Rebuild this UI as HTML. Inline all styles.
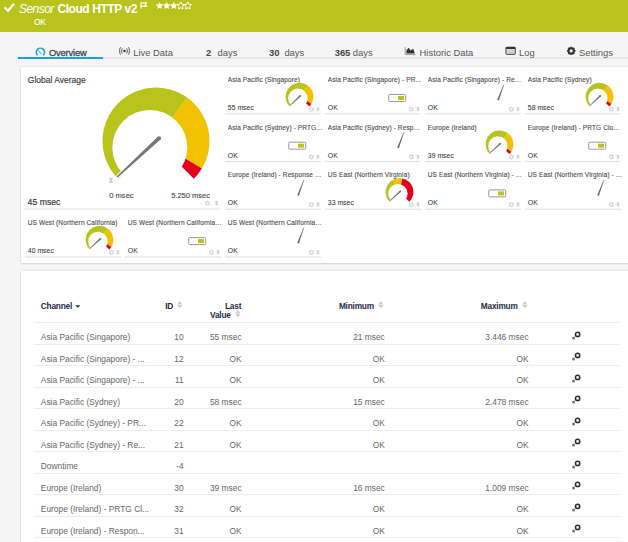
<!DOCTYPE html>
<html><head><meta charset="utf-8"><style>
*{margin:0;padding:0;box-sizing:border-box}
html,body{width:628px;height:542px;overflow:hidden;background:#f5f5f5;font-family:"Liberation Sans",sans-serif;position:relative}
.abs{position:absolute}
#hdr{position:absolute;left:0;top:0;width:628px;height:32px;background:#b8c31b}
.tab{position:absolute;top:47.7px;font-size:9.4px;color:#555;white-space:nowrap;line-height:10px}
.tab b{color:#444}
.panel{position:absolute;background:#fff;box-shadow:0 0 2px rgba(0,0,0,0.12),0 1px 2px rgba(0,0,0,0.10)}
.tt{position:absolute;font-size:6.5px;letter-spacing:0.12px;color:#4e4e4e;-webkit-text-stroke:0.12px #4e4e4e;white-space:nowrap;line-height:8px;width:95px;overflow:hidden;text-overflow:ellipsis}
.tv{position:absolute;font-size:6.9px;color:#383838;-webkit-text-stroke:0.06px #383838;white-space:nowrap;line-height:8px}
.th{position:absolute;font-size:8.3px;font-weight:bold;color:#1f2a44;white-space:nowrap;line-height:9px;letter-spacing:-0.2px}
.td{position:absolute;font-size:8.4px;color:#666;white-space:nowrap;line-height:10px}
.rl{position:absolute;left:34px;width:586px;height:1px;background:#ececec}
.ic{position:absolute}
svg.full{position:absolute;left:0;top:0}
</style></head><body>
<div id="hdr"></div>
<svg class="full" width="628" height="40" viewBox="0 0 628 40">
<path d="M4.5,7.4L8.0,10.8L14.0,3.8" fill="none" stroke="#fff" stroke-width="2.2"/>
<path d="M140.9,2.4v6.2 M140.9,2.9h5.7l-1.5,1.6l1.5,1.6h-5.7" fill="none" stroke="#fff" stroke-width="1.1"/>
<polygon points="159.60,1.90 160.75,4.22 163.31,4.59 161.45,6.40 161.89,8.96 159.60,7.75 157.31,8.96 157.75,6.40 155.89,4.59 158.45,4.22" fill="#fff"/><polygon points="166.65,1.90 167.80,4.22 170.36,4.59 168.50,6.40 168.94,8.96 166.65,7.75 164.36,8.96 164.80,6.40 162.94,4.59 165.50,4.22" fill="#fff"/><polygon points="173.70,1.90 174.85,4.22 177.41,4.59 175.55,6.40 175.99,8.96 173.70,7.75 171.41,8.96 171.85,6.40 169.99,4.59 172.55,4.22" fill="#fff"/><polygon points="180.75,1.90 181.90,4.22 184.46,4.59 182.60,6.40 183.04,8.96 180.75,7.75 178.46,8.96 178.90,6.40 177.04,4.59 179.60,4.22" fill="none" stroke="#fff" stroke-width="1.0"/><polygon points="187.80,1.90 188.95,4.22 191.51,4.59 189.65,6.40 190.09,8.96 187.80,7.75 185.51,8.96 185.95,6.40 184.09,4.59 186.65,4.22" fill="none" stroke="#fff" stroke-width="1.0"/>
</svg>
<div class="abs" style="left:19px;top:3px;font-size:12px;letter-spacing:-0.55px;font-style:italic;color:#fff;white-space:nowrap;line-height:13px">Sensor</div>
<div class="abs" style="left:57.4px;top:3px;font-size:12px;letter-spacing:-0.42px;font-weight:bold;color:#fff;white-space:nowrap;line-height:13px">Cloud HTTP v2</div>
<div class="abs" style="left:34px;top:17.8px;font-size:8.5px;letter-spacing:-0.3px;color:#fff;white-space:nowrap;line-height:9px;-webkit-text-stroke:0.15px #fff">OK</div>

<div class="abs" style="left:18px;top:57px;width:610px;height:2px;background:#e6e6e6"></div>
<div class="abs" style="left:18px;top:57px;width:84.5px;height:2px;background:#1ea0dc"></div>
<svg class="full" width="628" height="70" viewBox="0 0 628 70">
<path d="M37.5,55.2A4.1,4.1 0 1 1 43.3,55.2" fill="none" stroke="#1ea0dc" stroke-width="1.6"/>
<path d="M38.6,51.0L41.2,53.6" stroke="#6cbce6" stroke-width="1.3" stroke-linecap="round"/>
<circle cx="124.5" cy="50.9" r="1.25" fill="#333"/>
<path d="M122.4,48.3A1.0,2.7 0 0 0 122.4,53.5M126.6,48.3A1.0,2.7 0 0 1 126.6,53.5M120.9,47.3A1.3,3.6 0 0 0 120.9,54.5M128.1,47.3A1.3,3.6 0 0 1 128.1,54.5" fill="none" stroke="#555" stroke-width="0.95"/>
<path d="M405.2,47V54.6H415.6" fill="none" stroke="#999" stroke-width="1"/>
<path d="M406.4,53.4V50.4L408.6,47.8L410.6,50.6L411.6,49.8L413.4,49.0L414.8,53.4Z" fill="#333"/>
<rect x="505.9" y="47.2" width="9.4" height="7.2" rx="1.2" fill="#ddd" stroke="#444" stroke-width="1"/>
<rect x="505.9" y="47.0" width="9.4" height="2" fill="#333"/>
<path d="M507.6,50.8h6M507.6,52.6h6" stroke="#aaa" stroke-width="0.6"/>
<g transform="translate(571.2,50.9)"><circle r="2.6" fill="none" stroke="#333" stroke-width="2"/>
<path d="M0,-4.2V-2.5M0,4.2V2.5M-4.2,0H-2.5M4.2,0H2.5M-3,-3L-1.8,-1.8M3,3L1.8,1.8M-3,3L-1.8,1.8M3,-3L1.8,-1.8" stroke="#333" stroke-width="1.7"/></g>
</svg>
<div class="tab" style="left:49px;color:#3f4450;-webkit-text-stroke:0.3px #3f4450;letter-spacing:-0.2px">Overview</div>
<div class="tab" style="left:133.3px">Live Data</div>
<div class="tab" style="left:206px"><b>2</b></div><div class="tab" style="left:217.6px">days</div>
<div class="tab" style="left:269px"><b>30</b></div><div class="tab" style="left:284.4px">days</div>
<div class="tab" style="left:334.7px"><b>365</b></div><div class="tab" style="left:352.8px">days</div>
<div class="tab" style="left:419.6px">Historic Data</div>
<div class="tab" style="left:519px">Log</div>
<div class="tab" style="left:579px">Settings</div>

<div class="panel" style="left:21px;top:67px;width:620px;height:196px"></div>
<div class="panel" style="left:21px;top:271px;width:620px;height:300px"></div>

<div class="abs" style="left:27.8px;top:76px;font-size:8.5px;color:#3a3a3a;-webkit-text-stroke:0.15px #3a3a3a;white-space:nowrap;line-height:9px">Global Average</div>
<div class="abs" style="left:27.6px;top:198.2px;font-size:8.7px;color:#333;-webkit-text-stroke:0.15px #333;white-space:nowrap;line-height:9px">45 msec</div>
<div class="abs" style="left:109.2px;top:192px;font-size:7.6px;color:#444;-webkit-text-stroke:0.1px #444;white-space:nowrap;line-height:8px">0 msec</div>
<div class="abs" style="left:171.2px;top:192px;font-size:7.5px;color:#444;-webkit-text-stroke:0.1px #444;white-space:nowrap;line-height:8px">5.250 msec</div>

<div class="tt" style="left:227.8px;top:75.8px">Asia Pacific (Singapore)</div><div class="tv" style="left:227.8px;top:104.0px">55 msec</div><div class="tt" style="left:327.8px;top:75.8px">Asia Pacific (Singapore) - PR...</div><div class="tv" style="left:327.8px;top:104.0px">OK</div><div class="tt" style="left:427.8px;top:75.8px">Asia Pacific (Singapore) - Res...</div><div class="tv" style="left:427.8px;top:104.0px">OK</div><div class="tt" style="left:527.8px;top:75.8px">Asia Pacific (Sydney)</div><div class="tv" style="left:527.8px;top:104.0px">58 msec</div><div class="tt" style="left:227.8px;top:123.5px">Asia Pacific (Sydney) - PRTG ...</div><div class="tv" style="left:227.8px;top:151.7px">OK</div><div class="tt" style="left:327.8px;top:123.5px">Asia Pacific (Sydney) - Respo...</div><div class="tv" style="left:327.8px;top:151.7px">OK</div><div class="tt" style="left:427.8px;top:123.5px">Europe (Ireland)</div><div class="tv" style="left:427.8px;top:151.7px">39 msec</div><div class="tt" style="left:527.8px;top:123.5px">Europe (Ireland) - PRTG Cloud...</div><div class="tv" style="left:527.8px;top:151.7px">OK</div><div class="tt" style="left:227.8px;top:171.2px">Europe (Ireland) - Response C...</div><div class="tv" style="left:227.8px;top:199.4px">OK</div><div class="tt" style="left:327.8px;top:171.2px">US East (Northern Virginia)</div><div class="tv" style="left:327.8px;top:199.4px">33 msec</div><div class="tt" style="left:427.8px;top:171.2px">US East (Northern Virginia) - ...</div><div class="tv" style="left:427.8px;top:199.4px">OK</div><div class="tt" style="left:527.8px;top:171.2px">US East (Northern Virginia) - ...</div><div class="tv" style="left:527.8px;top:199.4px">OK</div><div class="tt" style="left:27.8px;top:218.9px">US West (Northern California)</div><div class="tv" style="left:27.8px;top:247.1px">40 msec</div><div class="tt" style="left:127.8px;top:218.9px">US West (Northern California)...</div><div class="tv" style="left:127.8px;top:247.1px">OK</div><div class="tt" style="left:227.8px;top:218.9px">US West (Northern California)...</div><div class="tv" style="left:227.8px;top:247.1px">OK</div>
<svg class="full" width="628" height="542" viewBox="0 0 628 542">
<rect x="224.8" y="113.2" width="96" height="1.2" fill="#e3e3e3"/><circle cx="311.40" cy="109.30" r="1.75" fill="none" stroke="#d3d3d3" stroke-width="1.3"/><path d="M316.40,107.20h3.2v0.9h-0.6v1.5l1,1h-4.0l1,-1v-1.5h-0.6z M317.70,110.60h0.6v1.4h-0.6z" fill="#d2d2d2"/><mask id="m1" maskUnits="userSpaceOnUse" x="0" y="0" width="628" height="542"><rect x="0" y="0" width="628" height="542" fill="#fff"/><circle cx="297.89" cy="98.28" r="9.71" fill="#000"/></mask><g mask="url(#m1)"><path d="M299.50,96.60L289.71,106.39A13.85,13.85 0 0 1 307.56,85.34Z" fill="#b8c31b"/><path d="M299.50,96.60L307.56,85.34A13.85,13.85 0 0 1 311.37,103.73Z" fill="#f2c200"/><path d="M299.50,96.60L311.37,103.73A13.85,13.85 0 0 1 309.29,106.39Z" fill="#e2001a"/></g><path d="M299.72,95.24L289.20,105.67L289.66,106.17L300.88,96.48Z" fill="#777" stroke="#fff" stroke-width="1.00" stroke-linejoin="round" paint-order="stroke"/><circle cx="300.30" cy="95.86" r="0.85" fill="#777"/><rect x="324.8" y="113.2" width="96" height="1.2" fill="#e3e3e3"/><circle cx="411.40" cy="109.30" r="1.75" fill="none" stroke="#d3d3d3" stroke-width="1.3"/><path d="M416.40,107.20h3.2v0.9h-0.6v1.5l1,1h-4.0l1,-1v-1.5h-0.6z M417.70,110.60h0.6v1.4h-0.6z" fill="#d2d2d2"/><rect x="388.7" y="94.5" width="17" height="7" rx="1" fill="#fff" stroke="#9a9a9a" stroke-width="1"/><rect x="398.0" y="96.0" width="6" height="4" fill="#b8c31b"/><rect x="424.8" y="113.2" width="96" height="1.2" fill="#e3e3e3"/><circle cx="511.40" cy="109.30" r="1.75" fill="none" stroke="#d3d3d3" stroke-width="1.3"/><path d="M516.40,107.20h3.2v0.9h-0.6v1.5l1,1h-4.0l1,-1v-1.5h-0.6z M517.70,110.60h0.6v1.4h-0.6z" fill="#d2d2d2"/><path d="M497.50,99.80L498.70,100.20L503.80,84.70Z" fill="#555" stroke="#555" stroke-width="0.35" stroke-linejoin="round"/><rect x="524.8" y="113.2" width="96" height="1.2" fill="#e3e3e3"/><circle cx="611.40" cy="109.30" r="1.75" fill="none" stroke="#d3d3d3" stroke-width="1.3"/><path d="M616.40,107.20h3.2v0.9h-0.6v1.5l1,1h-4.0l1,-1v-1.5h-0.6z M617.70,110.60h0.6v1.4h-0.6z" fill="#d2d2d2"/><mask id="m2" maskUnits="userSpaceOnUse" x="0" y="0" width="628" height="542"><rect x="0" y="0" width="628" height="542" fill="#fff"/><circle cx="597.89" cy="98.28" r="9.71" fill="#000"/></mask><g mask="url(#m2)"><path d="M599.50,96.60L589.71,106.39A13.85,13.85 0 0 1 607.56,85.34Z" fill="#b8c31b"/><path d="M599.50,96.60L607.56,85.34A13.85,13.85 0 0 1 611.37,103.73Z" fill="#f2c200"/><path d="M599.50,96.60L611.37,103.73A13.85,13.85 0 0 1 609.29,106.39Z" fill="#e2001a"/></g><path d="M599.72,95.24L589.20,105.67L589.66,106.17L600.88,96.48Z" fill="#777" stroke="#fff" stroke-width="1.00" stroke-linejoin="round" paint-order="stroke"/><circle cx="600.30" cy="95.86" r="0.85" fill="#777"/><rect x="224.8" y="160.9" width="96" height="1.2" fill="#e3e3e3"/><circle cx="311.40" cy="157.00" r="1.75" fill="none" stroke="#d3d3d3" stroke-width="1.3"/><path d="M316.40,154.90h3.2v0.9h-0.6v1.5l1,1h-4.0l1,-1v-1.5h-0.6z M317.70,158.30h0.6v1.4h-0.6z" fill="#d2d2d2"/><rect x="288.7" y="142.2" width="17" height="7" rx="1" fill="#fff" stroke="#9a9a9a" stroke-width="1"/><rect x="298.0" y="143.7" width="6" height="4" fill="#b8c31b"/><rect x="324.8" y="160.9" width="96" height="1.2" fill="#e3e3e3"/><circle cx="411.40" cy="157.00" r="1.75" fill="none" stroke="#d3d3d3" stroke-width="1.3"/><path d="M416.40,154.90h3.2v0.9h-0.6v1.5l1,1h-4.0l1,-1v-1.5h-0.6z M417.70,158.30h0.6v1.4h-0.6z" fill="#d2d2d2"/><path d="M397.50,147.50L398.70,147.90L403.80,132.40Z" fill="#555" stroke="#555" stroke-width="0.35" stroke-linejoin="round"/><rect x="424.8" y="160.9" width="96" height="1.2" fill="#e3e3e3"/><circle cx="511.40" cy="157.00" r="1.75" fill="none" stroke="#d3d3d3" stroke-width="1.3"/><path d="M516.40,154.90h3.2v0.9h-0.6v1.5l1,1h-4.0l1,-1v-1.5h-0.6z M517.70,158.30h0.6v1.4h-0.6z" fill="#d2d2d2"/><mask id="m3" maskUnits="userSpaceOnUse" x="0" y="0" width="628" height="542"><rect x="0" y="0" width="628" height="542" fill="#fff"/><circle cx="497.89" cy="145.98" r="9.71" fill="#000"/></mask><g mask="url(#m3)"><path d="M499.50,144.30L489.71,154.09A13.85,13.85 0 0 1 507.56,133.04Z" fill="#b8c31b"/><path d="M499.50,144.30L507.56,133.04A13.85,13.85 0 0 1 511.37,151.43Z" fill="#f2c200"/><path d="M499.50,144.30L511.37,151.43A13.85,13.85 0 0 1 509.29,154.09Z" fill="#e2001a"/></g><path d="M499.72,142.94L489.20,153.37L489.66,153.87L500.88,144.18Z" fill="#777" stroke="#fff" stroke-width="1.00" stroke-linejoin="round" paint-order="stroke"/><circle cx="500.30" cy="143.56" r="0.85" fill="#777"/><rect x="524.8" y="160.9" width="96" height="1.2" fill="#e3e3e3"/><circle cx="611.40" cy="157.00" r="1.75" fill="none" stroke="#d3d3d3" stroke-width="1.3"/><path d="M616.40,154.90h3.2v0.9h-0.6v1.5l1,1h-4.0l1,-1v-1.5h-0.6z M617.70,158.30h0.6v1.4h-0.6z" fill="#d2d2d2"/><rect x="588.7" y="142.2" width="17" height="7" rx="1" fill="#fff" stroke="#9a9a9a" stroke-width="1"/><rect x="598.0" y="143.7" width="6" height="4" fill="#b8c31b"/><rect x="224.8" y="208.6" width="96" height="1.2" fill="#e3e3e3"/><circle cx="311.40" cy="204.70" r="1.75" fill="none" stroke="#d3d3d3" stroke-width="1.3"/><path d="M316.40,202.60h3.2v0.9h-0.6v1.5l1,1h-4.0l1,-1v-1.5h-0.6z M317.70,206.00h0.6v1.4h-0.6z" fill="#d2d2d2"/><path d="M297.50,195.20L298.70,195.60L303.80,180.10Z" fill="#555" stroke="#555" stroke-width="0.35" stroke-linejoin="round"/><rect x="324.8" y="208.6" width="96" height="1.2" fill="#e3e3e3"/><circle cx="411.40" cy="204.70" r="1.75" fill="none" stroke="#d3d3d3" stroke-width="1.3"/><path d="M416.40,202.60h3.2v0.9h-0.6v1.5l1,1h-4.0l1,-1v-1.5h-0.6z M417.70,206.00h0.6v1.4h-0.6z" fill="#d2d2d2"/><mask id="m4" maskUnits="userSpaceOnUse" x="0" y="0" width="628" height="542"><rect x="0" y="0" width="628" height="542" fill="#fff"/><circle cx="397.89" cy="193.68" r="9.71" fill="#000"/></mask><g mask="url(#m4)"><path d="M399.50,192.00L389.71,201.79A13.85,13.85 0 0 1 392.45,180.08Z" fill="#b8c31b"/><path d="M399.50,192.00L392.45,180.08A13.85,13.85 0 0 1 402.38,178.45Z" fill="#f2c200"/><path d="M399.50,192.00L402.38,178.45A13.85,13.85 0 0 1 409.29,201.79Z" fill="#e2001a"/></g><path d="M399.72,190.64L389.20,201.07L389.66,201.57L400.88,191.88Z" fill="#777" stroke="#fff" stroke-width="1.00" stroke-linejoin="round" paint-order="stroke"/><circle cx="400.30" cy="191.26" r="0.85" fill="#777"/><rect x="424.8" y="208.6" width="96" height="1.2" fill="#e3e3e3"/><circle cx="511.40" cy="204.70" r="1.75" fill="none" stroke="#d3d3d3" stroke-width="1.3"/><path d="M516.40,202.60h3.2v0.9h-0.6v1.5l1,1h-4.0l1,-1v-1.5h-0.6z M517.70,206.00h0.6v1.4h-0.6z" fill="#d2d2d2"/><rect x="488.7" y="189.9" width="17" height="7" rx="1" fill="#fff" stroke="#9a9a9a" stroke-width="1"/><rect x="498.0" y="191.4" width="6" height="4" fill="#b8c31b"/><rect x="524.8" y="208.6" width="96" height="1.2" fill="#e3e3e3"/><circle cx="611.40" cy="204.70" r="1.75" fill="none" stroke="#d3d3d3" stroke-width="1.3"/><path d="M616.40,202.60h3.2v0.9h-0.6v1.5l1,1h-4.0l1,-1v-1.5h-0.6z M617.70,206.00h0.6v1.4h-0.6z" fill="#d2d2d2"/><path d="M597.50,195.20L598.70,195.60L603.80,180.10Z" fill="#555" stroke="#555" stroke-width="0.35" stroke-linejoin="round"/><rect x="24.8" y="256.3" width="96" height="1.2" fill="#e3e3e3"/><circle cx="111.40" cy="252.40" r="1.75" fill="none" stroke="#d3d3d3" stroke-width="1.3"/><path d="M116.40,250.30h3.2v0.9h-0.6v1.5l1,1h-4.0l1,-1v-1.5h-0.6z M117.70,253.70h0.6v1.4h-0.6z" fill="#d2d2d2"/><mask id="m5" maskUnits="userSpaceOnUse" x="0" y="0" width="628" height="542"><rect x="0" y="0" width="628" height="542" fill="#fff"/><circle cx="97.89" cy="241.38" r="9.71" fill="#000"/></mask><g mask="url(#m5)"><path d="M99.50,239.70L89.71,249.49A13.85,13.85 0 0 1 107.56,228.44Z" fill="#b8c31b"/><path d="M99.50,239.70L107.56,228.44A13.85,13.85 0 0 1 111.37,246.83Z" fill="#f2c200"/><path d="M99.50,239.70L111.37,246.83A13.85,13.85 0 0 1 109.29,249.49Z" fill="#e2001a"/></g><path d="M99.72,238.34L89.20,248.77L89.66,249.27L100.88,239.58Z" fill="#777" stroke="#fff" stroke-width="1.00" stroke-linejoin="round" paint-order="stroke"/><circle cx="100.30" cy="238.96" r="0.85" fill="#777"/><rect x="124.8" y="256.3" width="96" height="1.2" fill="#e3e3e3"/><circle cx="211.40" cy="252.40" r="1.75" fill="none" stroke="#d3d3d3" stroke-width="1.3"/><path d="M216.40,250.30h3.2v0.9h-0.6v1.5l1,1h-4.0l1,-1v-1.5h-0.6z M217.70,253.70h0.6v1.4h-0.6z" fill="#d2d2d2"/><rect x="188.7" y="237.6" width="17" height="7" rx="1" fill="#fff" stroke="#9a9a9a" stroke-width="1"/><rect x="198.0" y="239.1" width="6" height="4" fill="#b8c31b"/><rect x="224.8" y="256.3" width="96" height="1.2" fill="#e3e3e3"/><circle cx="311.40" cy="252.40" r="1.75" fill="none" stroke="#d3d3d3" stroke-width="1.3"/><path d="M316.40,250.30h3.2v0.9h-0.6v1.5l1,1h-4.0l1,-1v-1.5h-0.6z M317.70,253.70h0.6v1.4h-0.6z" fill="#d2d2d2"/><path d="M297.50,242.90L298.70,243.30L303.80,227.80Z" fill="#555" stroke="#555" stroke-width="0.35" stroke-linejoin="round"/><mask id="m6" maskUnits="userSpaceOnUse" x="0" y="0" width="628" height="542"><rect x="0" y="0" width="628" height="542" fill="#fff"/><circle cx="149.80" cy="147.50" r="37.50" fill="#000"/></mask><g mask="url(#m6)"><path d="M156.00,141.00L118.17,178.83A53.50,53.50 0 0 1 187.14,97.50Z" fill="#b8c31b"/><path d="M156.00,141.00L187.14,97.50A53.50,53.50 0 0 1 201.86,168.55Z" fill="#f2c200"/><path d="M156.00,141.00L201.86,168.55A53.50,53.50 0 0 1 193.83,178.83Z" fill="#e2001a"/></g><path d="M157.72,136.68L116.57,176.42L117.66,177.60L160.44,139.61Z" fill="#777" stroke="#fff" stroke-width="1.60" stroke-linejoin="round" paint-order="stroke"/><circle cx="159.08" cy="138.15" r="2.00" fill="#777"/><path d="M109.2,178.4h3.4M109.2,182.4h3.4M109.6,178.6L112.2,182.2M112.2,178.6L109.6,182.2" stroke="#a3acb8" stroke-width="0.65" fill="none"/><rect x="24" y="208.4" width="196" height="1.2" fill="#e3e3e3"/><circle cx="207.50" cy="203.30" r="1.75" fill="none" stroke="#d3d3d3" stroke-width="1.3"/><path d="M214.90,201.00h3.2v0.9h-0.6v1.5l1,1h-4.0l1,-1v-1.5h-0.6z M216.20,204.40h0.6v1.4h-0.6z" fill="#d2d2d2"/>
</svg>

<div class="th" style="left:40.8px;top:301.5px">Channel</div>
<svg class="abs" style="left:75px;top:304px" width="6" height="5" viewBox="0 0 6 5"><path d="M0.3,1.2H5.3L2.8,3.8Z" fill="#1f2a44"/></svg>
<div class="th" style="left:165.2px;top:301.5px">ID</div>
<div class="th" style="left:225px;top:301.5px">Last</div>
<div class="th" style="left:210px;top:310.8px">Value</div>
<div class="th" style="left:338.9px;top:301.5px">Minimum</div>
<div class="th" style="left:480.8px;top:301.5px">Maximum</div>
<svg class="abs" style="left:177.2px;top:300.8px" width="6" height="8" viewBox="0 0 6 8"><path d="M0.1,3.5L2.8,0.1L5.5,3.5ZM0.1,4.1L2.8,7.3L5.5,4.1Z" fill="#cdcdcd"/></svg>
<svg class="abs" style="left:234.6px;top:310.2px" width="6" height="8" viewBox="0 0 6 8"><path d="M0.1,3.5L2.8,0.1L5.5,3.5ZM0.1,4.1L2.8,7.3L5.5,4.1Z" fill="#cdcdcd"/></svg>
<svg class="abs" style="left:377.8px;top:300.8px" width="6" height="8" viewBox="0 0 6 8"><path d="M0.1,3.5L2.8,0.1L5.5,3.5ZM0.1,4.1L2.8,7.3L5.5,4.1Z" fill="#cdcdcd"/></svg>
<svg class="abs" style="left:521.6px;top:300.8px" width="6" height="8" viewBox="0 0 6 8"><path d="M0.1,3.5L2.8,0.1L5.5,3.5ZM0.1,4.1L2.8,7.3L5.5,4.1Z" fill="#cdcdcd"/></svg>
<div class="rl" style="top:321.8px"></div>
<div class="rl" style="top:343.5px"></div><div class="td" style="left:40.8px;top:332.1px">Asia Pacific (Singapore)</div><div class="td r" style="right:444.4px;top:332.1px">10</div><div class="td r" style="right:386.4px;top:332.1px">55 msec</div><div class="td r" style="right:243.2px;top:332.1px">21 msec</div><div class="td r" style="right:99.4px;top:332.1px">3.446 msec</div><svg class="ic" style="left:570px;top:330.6px" width="12" height="10" viewBox="0 0 12 10"><circle cx="7.6" cy="3.4" r="2.15" fill="none" stroke="#2a2a2a" stroke-width="1.5"/><circle cx="3.6" cy="6.9" r="1.5" fill="#777"/></svg><div class="rl" style="top:365.0px"></div><div class="td" style="left:40.8px;top:353.6px">Asia Pacific (Singapore) - ...</div><div class="td r" style="right:444.4px;top:353.6px">12</div><div class="td r" style="right:386.4px;top:353.6px">OK</div><div class="td r" style="right:243.2px;top:353.6px">OK</div><div class="td r" style="right:99.4px;top:353.6px">OK</div><svg class="ic" style="left:570px;top:352.1px" width="12" height="10" viewBox="0 0 12 10"><circle cx="7.6" cy="3.4" r="2.15" fill="none" stroke="#2a2a2a" stroke-width="1.5"/><circle cx="3.6" cy="6.9" r="1.5" fill="#777"/></svg><div class="rl" style="top:386.5px"></div><div class="td" style="left:40.8px;top:375.1px">Asia Pacific (Singapore) - ...</div><div class="td r" style="right:444.4px;top:375.1px">11</div><div class="td r" style="right:386.4px;top:375.1px">OK</div><div class="td r" style="right:243.2px;top:375.1px">OK</div><div class="td r" style="right:99.4px;top:375.1px">OK</div><svg class="ic" style="left:570px;top:373.6px" width="12" height="10" viewBox="0 0 12 10"><circle cx="7.6" cy="3.4" r="2.15" fill="none" stroke="#2a2a2a" stroke-width="1.5"/><circle cx="3.6" cy="6.9" r="1.5" fill="#777"/></svg><div class="rl" style="top:408.0px"></div><div class="td" style="left:40.8px;top:396.6px">Asia Pacific (Sydney)</div><div class="td r" style="right:444.4px;top:396.6px">20</div><div class="td r" style="right:386.4px;top:396.6px">58 msec</div><div class="td r" style="right:243.2px;top:396.6px">15 msec</div><div class="td r" style="right:99.4px;top:396.6px">2.478 msec</div><svg class="ic" style="left:570px;top:395.1px" width="12" height="10" viewBox="0 0 12 10"><circle cx="7.6" cy="3.4" r="2.15" fill="none" stroke="#2a2a2a" stroke-width="1.5"/><circle cx="3.6" cy="6.9" r="1.5" fill="#777"/></svg><div class="rl" style="top:429.5px"></div><div class="td" style="left:40.8px;top:418.1px">Asia Pacific (Sydney) - PR...</div><div class="td r" style="right:444.4px;top:418.1px">22</div><div class="td r" style="right:386.4px;top:418.1px">OK</div><div class="td r" style="right:243.2px;top:418.1px">OK</div><div class="td r" style="right:99.4px;top:418.1px">OK</div><svg class="ic" style="left:570px;top:416.6px" width="12" height="10" viewBox="0 0 12 10"><circle cx="7.6" cy="3.4" r="2.15" fill="none" stroke="#2a2a2a" stroke-width="1.5"/><circle cx="3.6" cy="6.9" r="1.5" fill="#777"/></svg><div class="rl" style="top:451.0px"></div><div class="td" style="left:40.8px;top:439.6px">Asia Pacific (Sydney) - Re...</div><div class="td r" style="right:444.4px;top:439.6px">21</div><div class="td r" style="right:386.4px;top:439.6px">OK</div><div class="td r" style="right:243.2px;top:439.6px">OK</div><div class="td r" style="right:99.4px;top:439.6px">OK</div><svg class="ic" style="left:570px;top:438.1px" width="12" height="10" viewBox="0 0 12 10"><circle cx="7.6" cy="3.4" r="2.15" fill="none" stroke="#2a2a2a" stroke-width="1.5"/><circle cx="3.6" cy="6.9" r="1.5" fill="#777"/></svg><div class="rl" style="top:472.5px"></div><div class="td" style="left:40.8px;top:461.1px">Downtime</div><div class="td r" style="right:444.4px;top:461.1px">-4</div><div class="td r" style="right:386.4px;top:461.1px"></div><div class="td r" style="right:243.2px;top:461.1px"></div><div class="td r" style="right:99.4px;top:461.1px"></div><svg class="ic" style="left:570px;top:459.6px" width="12" height="10" viewBox="0 0 12 10"><circle cx="7.6" cy="3.4" r="2.15" fill="none" stroke="#2a2a2a" stroke-width="1.5"/><circle cx="3.6" cy="6.9" r="1.5" fill="#777"/></svg><div class="rl" style="top:494.0px"></div><div class="td" style="left:40.8px;top:482.6px">Europe (Ireland)</div><div class="td r" style="right:444.4px;top:482.6px">30</div><div class="td r" style="right:386.4px;top:482.6px">39 msec</div><div class="td r" style="right:243.2px;top:482.6px">16 msec</div><div class="td r" style="right:99.4px;top:482.6px">1.009 msec</div><svg class="ic" style="left:570px;top:481.1px" width="12" height="10" viewBox="0 0 12 10"><circle cx="7.6" cy="3.4" r="2.15" fill="none" stroke="#2a2a2a" stroke-width="1.5"/><circle cx="3.6" cy="6.9" r="1.5" fill="#777"/></svg><div class="rl" style="top:515.5px"></div><div class="td" style="left:40.8px;top:504.1px">Europe (Ireland) - PRTG Cl...</div><div class="td r" style="right:444.4px;top:504.1px">32</div><div class="td r" style="right:386.4px;top:504.1px">OK</div><div class="td r" style="right:243.2px;top:504.1px">OK</div><div class="td r" style="right:99.4px;top:504.1px">OK</div><svg class="ic" style="left:570px;top:502.6px" width="12" height="10" viewBox="0 0 12 10"><circle cx="7.6" cy="3.4" r="2.15" fill="none" stroke="#2a2a2a" stroke-width="1.5"/><circle cx="3.6" cy="6.9" r="1.5" fill="#777"/></svg><div class="rl" style="top:537.0px"></div><div class="td" style="left:40.8px;top:525.6px">Europe (Ireland) - Respon...</div><div class="td r" style="right:444.4px;top:525.6px">31</div><div class="td r" style="right:386.4px;top:525.6px">OK</div><div class="td r" style="right:243.2px;top:525.6px">OK</div><div class="td r" style="right:99.4px;top:525.6px">OK</div><svg class="ic" style="left:570px;top:524.1px" width="12" height="10" viewBox="0 0 12 10"><circle cx="7.6" cy="3.4" r="2.15" fill="none" stroke="#2a2a2a" stroke-width="1.5"/><circle cx="3.6" cy="6.9" r="1.5" fill="#777"/></svg>
</body></html>
